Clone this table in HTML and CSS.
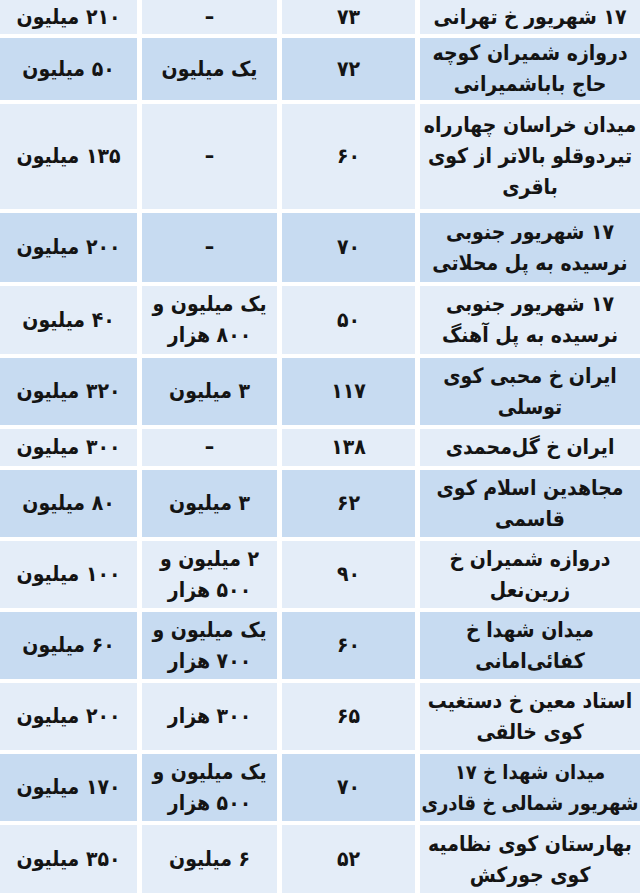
FILE: index.html
```html
<!DOCTYPE html>
<html lang="fa" dir="rtl">
<head>
<meta charset="utf-8">
<title>جدول اجاره</title>
<link rel="stylesheet" href="styles.css">
</head>
<body>
<div class="table">
  <div class="cell light">۱۷ شهریور خ تهرانی</div>
  <div class="cell light">۷۳</div>
  <div class="cell light">–</div>
  <div class="cell light">۲۱۰ میلیون</div>

  <div class="cell blue">دروازه شمیران کوچه<br>حاج باباشمیرانی</div>
  <div class="cell blue">۷۲</div>
  <div class="cell blue">یک میلیون</div>
  <div class="cell blue">۵۰ میلیون</div>

  <div class="cell light">میدان خراسان چهارراه<br>تیردوقلو بالاتر از کوی<br>باقری</div>
  <div class="cell light">۶۰</div>
  <div class="cell light">–</div>
  <div class="cell light">۱۳۵ میلیون</div>

  <div class="cell blue">۱۷ شهریور جنوبی<br>نرسیده به پل محلاتی</div>
  <div class="cell blue">۷۰</div>
  <div class="cell blue">–</div>
  <div class="cell blue">۲۰۰ میلیون</div>

  <div class="cell light">۱۷ شهریور جنوبی<br>نرسیده به پل آهنگ</div>
  <div class="cell light">۵۰</div>
  <div class="cell light">یک میلیون و<br>۸۰۰ هزار</div>
  <div class="cell light">۴۰ میلیون</div>

  <div class="cell blue">ایران خ محبی کوی<br>توسلی</div>
  <div class="cell blue">۱۱۷</div>
  <div class="cell blue">۳ میلیون</div>
  <div class="cell blue">۳۲۰ میلیون</div>

  <div class="cell light">ایران خ گل‌محمدی</div>
  <div class="cell light">۱۳۸</div>
  <div class="cell light">–</div>
  <div class="cell light">۳۰۰ میلیون</div>

  <div class="cell blue">مجاهدین اسلام کوی<br>قاسمی</div>
  <div class="cell blue">۶۲</div>
  <div class="cell blue">۳ میلیون</div>
  <div class="cell blue">۸۰ میلیون</div>

  <div class="cell light">دروازه شمیران خ<br>زرین‌نعل</div>
  <div class="cell light">۹۰</div>
  <div class="cell light">۲ میلیون و<br>۵۰۰ هزار</div>
  <div class="cell light">۱۰۰ میلیون</div>

  <div class="cell blue">میدان شهدا خ<br>کفائی‌امانی</div>
  <div class="cell blue">۶۰</div>
  <div class="cell blue">یک میلیون و<br>۷۰۰ هزار</div>
  <div class="cell blue">۶۰ میلیون</div>

  <div class="cell light">استاد معین خ دستغیب<br>کوی خالقی</div>
  <div class="cell light">۶۵</div>
  <div class="cell light">۳۰۰ هزار</div>
  <div class="cell light">۲۰۰ میلیون</div>

  <div class="cell blue fit">میدان شهدا خ ۱۷<br>شهریور شمالی خ قادری</div>
  <div class="cell blue">۷۰</div>
  <div class="cell blue">یک میلیون و<br>۵۰۰ هزار</div>
  <div class="cell blue">۱۷۰ میلیون</div>

  <div class="cell light">بهارستان کوی نظامیه<br>کوی جورکش</div>
  <div class="cell light">۵۲</div>
  <div class="cell light">۶ میلیون</div>
  <div class="cell light">۳۵۰ میلیون</div>
</div>
</body>
</html>
```
FILE: styles.css
```css
html, body {
  margin: 0;
  padding: 0;
  background: #ffffff;
}

body {
  width: 640px;
  height: 893px;
  overflow: hidden;
  font-family: "DejaVu Sans Condensed", "DejaVu Sans", sans-serif;
  color: #141414;
}

.table {
  direction: rtl;
  display: grid;
  grid-template-columns: 220px 133px 135px 137px;
  grid-template-rows: 34px 62px 105px 69px 68px 67px 37px 67px 67px 67px 67px 67px 69px;
  column-gap: 5px;
  row-gap: 4px;
  width: 640px;
  height: 893px;
}

.cell {
  display: flex;
  align-items: center;
  justify-content: center;
  text-align: center;
  font-size: 21px;
  font-weight: bold;
  line-height: 31px;
  white-space: nowrap;
}

.fit {
  font-size: 20px;
}

.light {
  background: #e4edf8;
}

.blue {
  background: #c7dbf1;
}
```
